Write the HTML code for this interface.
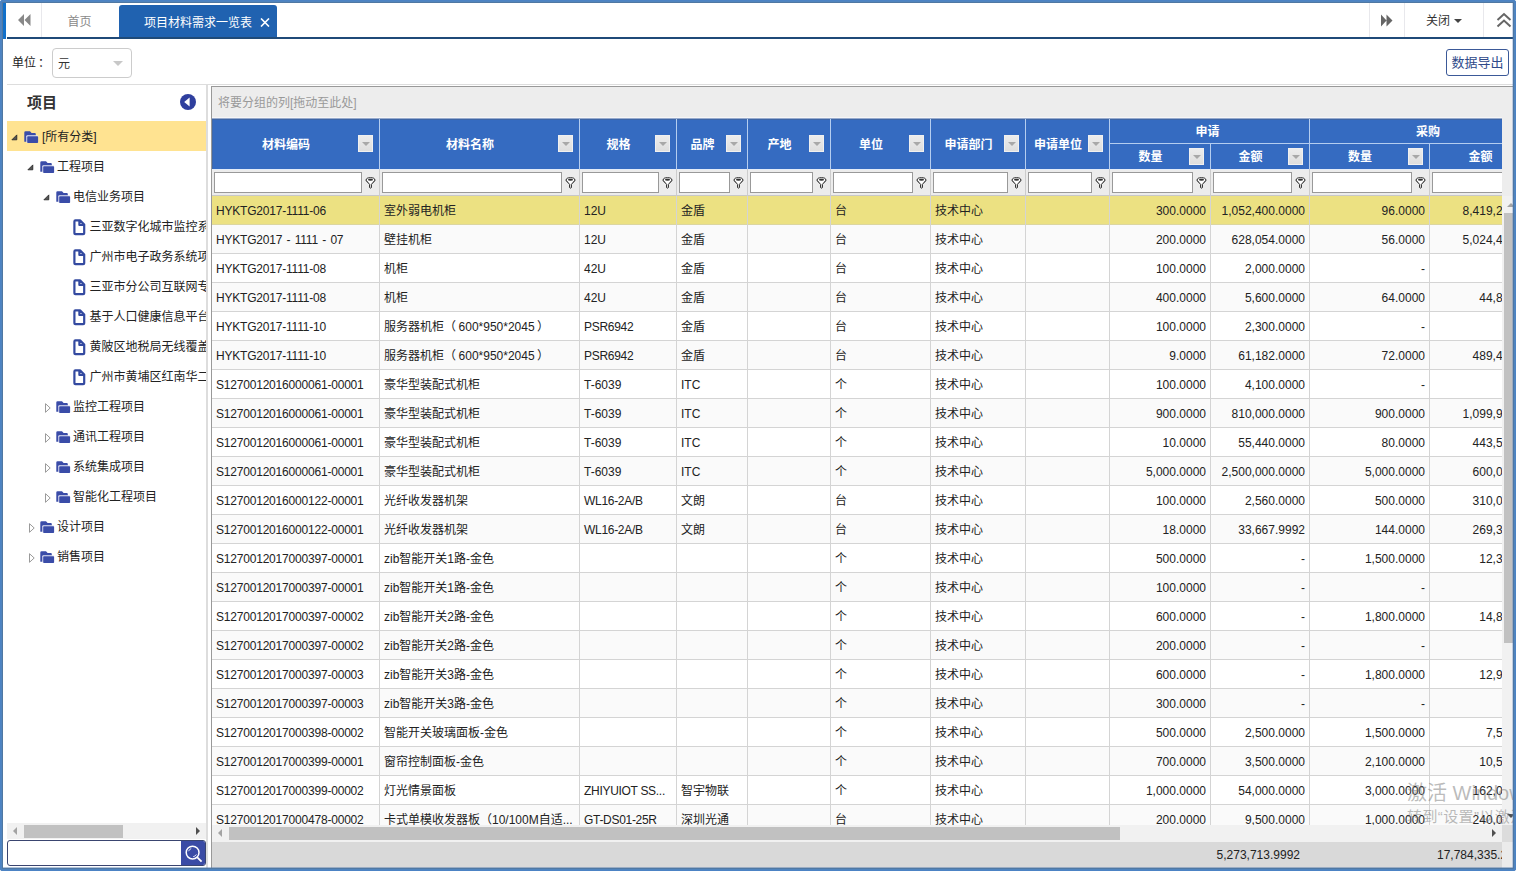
<!DOCTYPE html>
<html lang="zh-CN"><head><meta charset="utf-8"><title>项目材料需求一览表</title>
<style>
html,body{margin:0;padding:0;background:#fff;}
body{width:1518px;height:872px;position:relative;overflow:hidden;font-family:"Liberation Sans","Noto Sans CJK SC",sans-serif;font-size:12px;color:#222;}
div,span,b,i{box-sizing:border-box;}
b,i{font-weight:normal;font-style:normal;}
.abs{position:absolute;}
#frame{position:absolute;left:0;top:0;width:1516px;height:871px;border-radius:3px;z-index:50;pointer-events:none;box-shadow:inset 0 0 0 1px #4c83c4,inset 0 0 0 2px #5084be,inset 0 0 0 3px #4f78a3;}
#frame:before{content:"";position:absolute;left:3px;top:867px;width:1510px;height:1px;background:rgba(80,120,170,.45);}
#frame:after{content:"";position:absolute;left:1512px;top:3px;width:1px;height:865px;background:rgba(80,120,190,.3);}
#strip{position:absolute;left:3px;top:3px;width:3px;height:36px;background:#1170ca;}
#tabline{position:absolute;left:7px;top:37px;width:1506px;height:2px;background:#1f4a78;}
.vsep{position:absolute;top:3px;width:1px;height:34px;background:#e8e8ec;}
#home{position:absolute;left:41px;top:3px;width:77px;height:34px;line-height:39px;text-align:center;color:#8a8a8a;}
#tab{position:absolute;left:119px;top:5px;width:158px;height:32px;background:#2062b0;border-radius:3px 3px 0 0;color:#fff;line-height:36px;}
#tab span{position:absolute;left:25px;top:0;white-space:nowrap;}
#close{position:absolute;left:1426px;top:3px;height:34px;line-height:36px;color:#333;white-space:nowrap;}
#unitlbl{position:absolute;left:12px;top:51px;height:24px;line-height:24px;white-space:nowrap;color:#222;}
#unitsel{position:absolute;left:52px;top:48px;width:80px;height:30px;border:1px solid #ccc;border-radius:4px;background:#fff;line-height:30px;padding-left:5px;color:#333;}
#unitsel:after{content:"";position:absolute;left:59.5px;top:12px;border:5px solid transparent;border-top:5px solid #c8c8c8;border-bottom:0;}
#export{position:absolute;left:1446px;top:49px;width:63px;height:27px;border:1px solid #3b5998;border-radius:3px;background:#fff;color:#2f4a8a;font-size:13px;line-height:26px;text-align:center;white-space:nowrap;}
#hline{position:absolute;left:7px;top:84px;width:1506px;height:1px;background:#ddd;}
/* left panel */
#left{position:absolute;left:7px;top:85px;width:199px;height:783px;background:#fff;overflow:hidden;}
#ltitle{position:absolute;left:20px;top:7px;font-size:15px;font-weight:bold;color:#333;line-height:22px;}
#lcol{position:absolute;left:173px;top:9px;width:16px;height:16px;}
.tn{position:absolute;left:0;width:199px;height:30px;line-height:32px;white-space:nowrap;overflow:hidden;color:#222;}
.tn.sel{background:#ffe391;}
.tn svg{position:absolute;}
.tn span{position:absolute;top:0;}
#lscroll{position:absolute;left:0;top:738px;width:199px;height:16px;background:#f1f1f1;}
#lthumb{position:absolute;left:17px;top:2px;width:99px;height:13px;background:#c1c1c1;}
#search{position:absolute;left:0;top:755px;width:199px;height:26px;border:1px solid #3a4570;border-radius:3px;background:#fff;overflow:hidden;}
#sbtn{position:absolute;left:173px;top:-1px;width:26px;height:27px;background:#3a4ba5;}
#split{position:absolute;left:206px;top:85px;width:2px;height:783px;background:#ddd;}
/* grid */
#gborder{position:absolute;left:211px;top:86px;width:1302px;height:782px;border-left:1px solid #999;border-top:1px solid #999;}
#grid{position:absolute;left:212px;top:87px;width:1301px;height:781px;overflow:hidden;background:#ededed;}
#grouppanel{position:absolute;left:0;top:0;width:1301px;height:32px;line-height:33px;padding-left:6px;color:#999;background:#ededed;}
#gpl{position:absolute;left:0;top:30px;width:1290px;height:2px;background:linear-gradient(#f6f6f6 50%,#98abcd 50%);}
#ghead{position:absolute;left:0;top:32px;width:1290px;height:50px;background:#356bc1;box-shadow:inset 0 1px 0 #3f66a6,inset 1px 0 0 #4068a8;overflow:hidden;color:#fff;font-weight:bold;}
.hc{position:absolute;text-align:center;white-space:nowrap;overflow:hidden;}
.hc .ht{display:inline-block;margin-right:19px;}
.fb{position:absolute;right:6px;top:16px;width:15px;height:17px;border:1px solid #f0f0f0;background:linear-gradient(#ececec,#dedede);}
.fb:after{content:"";position:absolute;left:3px;top:6px;border:4px solid transparent;border-top:4px solid #a8a8a8;border-bottom:0;}
.hc.sub .fb{top:4px;}
.hb{position:absolute;top:0;height:25px;line-height:27px;text-align:center;padding-right:4px;border-bottom:1px solid #b4cdf0;}
.hs{position:absolute;top:0;width:1px;height:50px;background:#b4cdf0;}
#gfilter{position:absolute;left:0;top:82px;width:1290px;height:27px;background:#ececec;overflow:hidden;box-shadow:inset 0 1px 0 #e4ecf8,inset 0 -1px 0 #c8c8c8;}
.fc{position:absolute;top:0;height:27px;}
.fi{position:absolute;left:2px;right:17px;top:3px;height:21px;background:#fff;border:1px solid #999;}
.fun{position:absolute;right:3px;top:8px;}
.fs{position:absolute;top:0;width:1px;height:27px;background:#ccc;}
#gdata{position:absolute;left:0;top:109px;width:1290px;height:629px;background:#fff;overflow:hidden;}
.gr{position:absolute;left:0;width:1400px;height:29px;border-bottom:1px solid #d4d4d4;line-height:30px;}
.gr.alt{background:#fafafa;}
.gr.sel{background:#ece182;border-bottom-color:#dcd6a0;}
.c{position:absolute;top:0;height:28px;padding:0 4px;white-space:nowrap;overflow:hidden;}
.c.n{text-align:right;}
.ds{position:absolute;top:0;width:1px;height:700px;background:#d4d4d4;}
#hscroll{position:absolute;left:0;top:738px;width:1290px;height:17px;background:#f1f1f1;}
#hthumb{position:absolute;left:17px;top:2px;width:891px;height:13px;background:#c1c1c1;}
#corner{position:absolute;left:1290px;top:738px;width:11px;height:17px;background:#dcdcdc;}
#vscroll{position:absolute;left:1290px;top:109px;width:17px;height:629px;background:#f1f1f1;}
#vthumb{position:absolute;left:2px;top:17px;width:13px;height:430px;background:#c1c1c1;}
#gfoot{position:absolute;left:0;top:755px;width:1290px;height:26px;background:#d9d9d9;line-height:27px;overflow:hidden;}
#gfoot2{position:absolute;left:1290px;top:755px;width:11px;height:26px;background:#ebebeb;}
.ft{position:absolute;top:0;text-align:right;white-space:nowrap;}
.tri{position:absolute;width:0;height:0;border:4px solid transparent;}
#wm{position:absolute;left:1407px;top:779px;color:rgba(120,120,120,.5);white-space:nowrap;z-index:40;width:106px;overflow:hidden;pointer-events:none;}
#wm div{white-space:nowrap;}

.c.k{letter-spacing:-0.2px;}
.c.k3{letter-spacing:-0.3px;}

</style></head><body>
<div id="strip"></div>
<div id="tabline"></div>
<svg class="abs" style="left:18px;top:14px" width="13" height="13" viewBox="0 0 13 13"><path d="M0 6 L6 0 V12 Z M6.5 6 L12.5 0 V12 Z" fill="#888"/></svg>
<div class="vsep" style="left:41px"></div>
<div id="home">首页</div>
<div id="tab"><span>项目材料需求一览表</span>
<svg class="abs" style="left:141px;top:13px" width="10" height="9" viewBox="0 0 10 9"><path d="M1 0.5 L9 8.5 M9 0.5 L1 8.5" stroke="#fff" stroke-width="1.6" fill="none"/></svg></div>
<div class="vsep" style="left:1369px"></div>
<svg class="abs" style="left:1381px;top:14px" width="12" height="13" viewBox="0 0 12 13"><path d="M0 0.5 L5.5 6.5 L0 12.5 Z M5.5 0.5 L11.5 6.5 L5.5 12.5 Z" fill="#666"/></svg>
<div class="vsep" style="left:1404px"></div>
<div id="close">关闭</div>
<div class="tri" style="left:1454px;top:19px;border-top:4px solid #444;border-bottom:0"></div>
<div class="vsep" style="left:1483px"></div>
<svg class="abs" style="left:1496px;top:12px" width="16" height="16" viewBox="0 0 16 16"><path d="M1.5 8 L8 2 L14.5 8 M1.5 14.5 L8 8.5 L14.5 14.5" stroke="#666" stroke-width="2" fill="none"/></svg>
<div id="unitlbl">单位<span style="margin-left:2px">：</span></div>
<div id="unitsel">元</div>
<div id="export">数据导出</div>
<div id="hline"></div>

<div id="left">
<div id="ltitle">项目</div>
<svg id="lcol" viewBox="0 0 16 16"><circle cx="8" cy="8" r="8" fill="#2f3f9e"/><path d="M4.2 8 L9.6 3.6 V12.4 Z" fill="#fff"/></svg>
<div class="tn sel" style="top:36px"><svg style="left:4px;top:13px" width="7" height="7" viewBox="0 0 7 7"><path d="M5.8 0.9 V5.8 H0.9 Z" fill="#555" stroke="#222" stroke-width="0.8"/></svg><svg style="left:17px;top:10px" width="15" height="13" viewBox="0 0 15 13"><path d="M0.3 1.4 Q0.3 0.2 1.5 0.2 H6 L7.6 2 H10.8 Q11.8 2 11.8 3 V10.8 H0.3 Z" fill="#3a4ca8"/><rect x="2.3" y="4.3" width="11.8" height="7.7" rx="1" fill="#e4e6f4"/><rect x="3.2" y="5.2" width="10.9" height="6.8" rx="0.8" fill="#3a4ca8"/></svg><span style="left:35px">[所有分类]</span></div>
<div class="tn" style="top:66px"><svg style="left:20px;top:13px" width="7" height="7" viewBox="0 0 7 7"><path d="M5.8 0.9 V5.8 H0.9 Z" fill="#555" stroke="#222" stroke-width="0.8"/></svg><svg style="left:33px;top:10px" width="15" height="13" viewBox="0 0 15 13"><path d="M0.3 1.4 Q0.3 0.2 1.5 0.2 H6 L7.6 2 H10.8 Q11.8 2 11.8 3 V10.8 H0.3 Z" fill="#3a4ca8"/><rect x="2.3" y="4.3" width="11.8" height="7.7" rx="1" fill="#e4e6f4"/><rect x="3.2" y="5.2" width="10.9" height="6.8" rx="0.8" fill="#3a4ca8"/></svg><span style="left:50px">工程项目</span></div>
<div class="tn" style="top:96px"><svg style="left:36px;top:13px" width="7" height="7" viewBox="0 0 7 7"><path d="M5.8 0.9 V5.8 H0.9 Z" fill="#555" stroke="#222" stroke-width="0.8"/></svg><svg style="left:49px;top:10px" width="15" height="13" viewBox="0 0 15 13"><path d="M0.3 1.4 Q0.3 0.2 1.5 0.2 H6 L7.6 2 H10.8 Q11.8 2 11.8 3 V10.8 H0.3 Z" fill="#3a4ca8"/><rect x="2.3" y="4.3" width="11.8" height="7.7" rx="1" fill="#e4e6f4"/><rect x="3.2" y="5.2" width="10.9" height="6.8" rx="0.8" fill="#3a4ca8"/></svg><span style="left:66px">电信业务项目</span></div>
<div class="tn" style="top:126px"><svg style="left:66px;top:8px" width="13" height="17" viewBox="0 0 13 17"><path d="M2.4 1.4 H7 L11.2 5.6 V14.2 Q11.2 15.2 10.2 15.2 H2.4 Q1.4 15.2 1.4 14.2 V2.4 Q1.4 1.4 2.4 1.4 Z M6.4 1.6 V6 H11" fill="none" stroke="#3349a0" stroke-width="2.2" stroke-linejoin="round"/></svg><span style="left:82.5px">三亚数字化城市监控系统项目</span></div>
<div class="tn" style="top:156px"><svg style="left:66px;top:8px" width="13" height="17" viewBox="0 0 13 17"><path d="M2.4 1.4 H7 L11.2 5.6 V14.2 Q11.2 15.2 10.2 15.2 H2.4 Q1.4 15.2 1.4 14.2 V2.4 Q1.4 1.4 2.4 1.4 Z M6.4 1.6 V6 H11" fill="none" stroke="#3349a0" stroke-width="2.2" stroke-linejoin="round"/></svg><span style="left:82.5px">广州市电子政务系统项目</span></div>
<div class="tn" style="top:186px"><svg style="left:66px;top:8px" width="13" height="17" viewBox="0 0 13 17"><path d="M2.4 1.4 H7 L11.2 5.6 V14.2 Q11.2 15.2 10.2 15.2 H2.4 Q1.4 15.2 1.4 14.2 V2.4 Q1.4 1.4 2.4 1.4 Z M6.4 1.6 V6 H11" fill="none" stroke="#3349a0" stroke-width="2.2" stroke-linejoin="round"/></svg><span style="left:82.5px">三亚市分公司互联网专线项目</span></div>
<div class="tn" style="top:216px"><svg style="left:66px;top:8px" width="13" height="17" viewBox="0 0 13 17"><path d="M2.4 1.4 H7 L11.2 5.6 V14.2 Q11.2 15.2 10.2 15.2 H2.4 Q1.4 15.2 1.4 14.2 V2.4 Q1.4 1.4 2.4 1.4 Z M6.4 1.6 V6 H11" fill="none" stroke="#3349a0" stroke-width="2.2" stroke-linejoin="round"/></svg><span style="left:82.5px">基于人口健康信息平台项目</span></div>
<div class="tn" style="top:246px"><svg style="left:66px;top:8px" width="13" height="17" viewBox="0 0 13 17"><path d="M2.4 1.4 H7 L11.2 5.6 V14.2 Q11.2 15.2 10.2 15.2 H2.4 Q1.4 15.2 1.4 14.2 V2.4 Q1.4 1.4 2.4 1.4 Z M6.4 1.6 V6 H11" fill="none" stroke="#3349a0" stroke-width="2.2" stroke-linejoin="round"/></svg><span style="left:82.5px">黄陂区地税局无线覆盖项目</span></div>
<div class="tn" style="top:276px"><svg style="left:66px;top:8px" width="13" height="17" viewBox="0 0 13 17"><path d="M2.4 1.4 H7 L11.2 5.6 V14.2 Q11.2 15.2 10.2 15.2 H2.4 Q1.4 15.2 1.4 14.2 V2.4 Q1.4 1.4 2.4 1.4 Z M6.4 1.6 V6 H11" fill="none" stroke="#3349a0" stroke-width="2.2" stroke-linejoin="round"/></svg><span style="left:82.5px">广州市黄埔区红南华二期项目</span></div>
<div class="tn" style="top:306px"><svg style="left:38px;top:12px" width="6" height="10" viewBox="0 0 6 10"><path d="M0.5 0.7 L5.2 5 L0.5 9.3 Z" fill="#fff" stroke="#9a9a9a" stroke-width="1"/></svg><svg style="left:49px;top:10px" width="15" height="13" viewBox="0 0 15 13"><path d="M0.3 1.4 Q0.3 0.2 1.5 0.2 H6 L7.6 2 H10.8 Q11.8 2 11.8 3 V10.8 H0.3 Z" fill="#3a4ca8"/><rect x="2.3" y="4.3" width="11.8" height="7.7" rx="1" fill="#e4e6f4"/><rect x="3.2" y="5.2" width="10.9" height="6.8" rx="0.8" fill="#3a4ca8"/></svg><span style="left:66px">监控工程项目</span></div>
<div class="tn" style="top:336px"><svg style="left:38px;top:12px" width="6" height="10" viewBox="0 0 6 10"><path d="M0.5 0.7 L5.2 5 L0.5 9.3 Z" fill="#fff" stroke="#9a9a9a" stroke-width="1"/></svg><svg style="left:49px;top:10px" width="15" height="13" viewBox="0 0 15 13"><path d="M0.3 1.4 Q0.3 0.2 1.5 0.2 H6 L7.6 2 H10.8 Q11.8 2 11.8 3 V10.8 H0.3 Z" fill="#3a4ca8"/><rect x="2.3" y="4.3" width="11.8" height="7.7" rx="1" fill="#e4e6f4"/><rect x="3.2" y="5.2" width="10.9" height="6.8" rx="0.8" fill="#3a4ca8"/></svg><span style="left:66px">通讯工程项目</span></div>
<div class="tn" style="top:366px"><svg style="left:38px;top:12px" width="6" height="10" viewBox="0 0 6 10"><path d="M0.5 0.7 L5.2 5 L0.5 9.3 Z" fill="#fff" stroke="#9a9a9a" stroke-width="1"/></svg><svg style="left:49px;top:10px" width="15" height="13" viewBox="0 0 15 13"><path d="M0.3 1.4 Q0.3 0.2 1.5 0.2 H6 L7.6 2 H10.8 Q11.8 2 11.8 3 V10.8 H0.3 Z" fill="#3a4ca8"/><rect x="2.3" y="4.3" width="11.8" height="7.7" rx="1" fill="#e4e6f4"/><rect x="3.2" y="5.2" width="10.9" height="6.8" rx="0.8" fill="#3a4ca8"/></svg><span style="left:66px">系统集成项目</span></div>
<div class="tn" style="top:396px"><svg style="left:38px;top:12px" width="6" height="10" viewBox="0 0 6 10"><path d="M0.5 0.7 L5.2 5 L0.5 9.3 Z" fill="#fff" stroke="#9a9a9a" stroke-width="1"/></svg><svg style="left:49px;top:10px" width="15" height="13" viewBox="0 0 15 13"><path d="M0.3 1.4 Q0.3 0.2 1.5 0.2 H6 L7.6 2 H10.8 Q11.8 2 11.8 3 V10.8 H0.3 Z" fill="#3a4ca8"/><rect x="2.3" y="4.3" width="11.8" height="7.7" rx="1" fill="#e4e6f4"/><rect x="3.2" y="5.2" width="10.9" height="6.8" rx="0.8" fill="#3a4ca8"/></svg><span style="left:66px">智能化工程项目</span></div>
<div class="tn" style="top:426px"><svg style="left:22px;top:12px" width="6" height="10" viewBox="0 0 6 10"><path d="M0.5 0.7 L5.2 5 L0.5 9.3 Z" fill="#fff" stroke="#9a9a9a" stroke-width="1"/></svg><svg style="left:33px;top:10px" width="15" height="13" viewBox="0 0 15 13"><path d="M0.3 1.4 Q0.3 0.2 1.5 0.2 H6 L7.6 2 H10.8 Q11.8 2 11.8 3 V10.8 H0.3 Z" fill="#3a4ca8"/><rect x="2.3" y="4.3" width="11.8" height="7.7" rx="1" fill="#e4e6f4"/><rect x="3.2" y="5.2" width="10.9" height="6.8" rx="0.8" fill="#3a4ca8"/></svg><span style="left:50px">设计项目</span></div>
<div class="tn" style="top:456px"><svg style="left:22px;top:12px" width="6" height="10" viewBox="0 0 6 10"><path d="M0.5 0.7 L5.2 5 L0.5 9.3 Z" fill="#fff" stroke="#9a9a9a" stroke-width="1"/></svg><svg style="left:33px;top:10px" width="15" height="13" viewBox="0 0 15 13"><path d="M0.3 1.4 Q0.3 0.2 1.5 0.2 H6 L7.6 2 H10.8 Q11.8 2 11.8 3 V10.8 H0.3 Z" fill="#3a4ca8"/><rect x="2.3" y="4.3" width="11.8" height="7.7" rx="1" fill="#e4e6f4"/><rect x="3.2" y="5.2" width="10.9" height="6.8" rx="0.8" fill="#3a4ca8"/></svg><span style="left:50px">销售项目</span></div>
<div id="lscroll"><div class="tri" style="left:6px;top:4px;border-right:4px solid #a3a3a3;border-left:0"></div><div id="lthumb"></div><div class="tri" style="left:189px;top:4px;border-left:4px solid #505050;border-right:0"></div></div>
<div id="search"><div id="sbtn"><svg class="abs" style="left:3.5px;top:4.5px" width="18" height="18" viewBox="0 0 18 18"><circle cx="7.6" cy="7.6" r="6.4" fill="none" stroke="#fff" stroke-width="1.5"/><path d="M12.3 12.3 L16.6 16.6" stroke="#fff" stroke-width="1.8"/><path d="M3.6 6.2 A4.2 4.2 0 0 1 6.2 3.6 M11.4 9.4 A4.2 4.2 0 0 1 8.2 11.7" fill="none" stroke="#dfe3f6" stroke-width="1"/></svg></div></div>
</div>
<div id="split"></div>
<div id="gborder"></div>
<div id="grid">
<div id="grouppanel">将要分组的列[拖动至此处]</div><div id="gpl"></div>
<div id="ghead">
<div class="hc" style="left:0px;width:167px;top:0;height:50px;line-height:52px"><span class="ht" >材料编码</span><i class="fb"></i></div>
<div class="hc" style="left:168px;width:199px;top:0;height:50px;line-height:52px"><span class="ht" >材料名称</span><i class="fb"></i></div>
<div class="hc" style="left:368px;width:96px;top:0;height:50px;line-height:52px"><span class="ht" >规格</span><i class="fb"></i></div>
<div class="hc" style="left:465px;width:70px;top:0;height:50px;line-height:52px"><span class="ht" >品牌</span><i class="fb"></i></div>
<div class="hc" style="left:536px;width:82px;top:0;height:50px;line-height:52px"><span class="ht" >产地</span><i class="fb"></i></div>
<div class="hc" style="left:619px;width:99px;top:0;height:50px;line-height:52px"><span class="ht" >单位</span><i class="fb"></i></div>
<div class="hc" style="left:719px;width:94px;top:0;height:50px;line-height:52px"><span class="ht" >申请部门</span><i class="fb"></i></div>
<div class="hc" style="left:814px;width:83px;top:0;height:50px;line-height:52px"><span class="ht" >申请单位</span><i class="fb"></i></div>
<div class="hb" style="left:898px;width:199px">申请</div>
<div class="hb" style="left:1098px;width:240px">采购</div>
<div class="hc sub" style="left:898px;width:100px;top:25px;height:25px;line-height:26px"><span class="ht">数量</span><i class="fb"></i></div>
<div class="hc sub" style="left:999px;width:98px;top:25px;height:25px;line-height:26px"><span class="ht">金额</span><i class="fb"></i></div>
<div class="hc sub" style="left:1098px;width:119px;top:25px;height:25px;line-height:26px"><span class="ht">数量</span><i class="fb"></i></div>
<div class="hc sub" style="left:1218px;width:120px;top:25px;height:25px;line-height:26px"><span class="ht">金额</span><i class="fb"></i></div>
<b class="hs" style="left:167px"></b>
<b class="hs" style="left:367px"></b>
<b class="hs" style="left:464px"></b>
<b class="hs" style="left:535px"></b>
<b class="hs" style="left:618px"></b>
<b class="hs" style="left:718px"></b>
<b class="hs" style="left:813px"></b>
<b class="hs" style="left:897px"></b>
<b class="hs" style="left:998px;top:25px;height:25px"></b>
<b class="hs" style="left:1097px"></b>
<b class="hs" style="left:1217px;top:25px;height:25px"></b>
<b class="hs" style="left:1338px"></b>
</div>
<div id="gfilter">
<div class="fc" style="left:0px;width:167px"><span class="fi"></span><svg class="fun" width="11" height="12" viewBox="0 0 11 12"><ellipse cx="5.5" cy="3" rx="4.4" ry="2.3" fill="#fff" stroke="#222" stroke-width="1"/><path d="M1.3 3.6 L4.6 7.4 V10.6 Q5.5 11.6 6.4 10.6 V7.4 L9.7 3.6" fill="#fff" stroke="#222" stroke-width="1"/><ellipse cx="5.5" cy="2.7" rx="2.6" ry="1" fill="#333"/></svg></div>
<b class="fs" style="left:167px"></b>
<div class="fc" style="left:168px;width:199px"><span class="fi"></span><svg class="fun" width="11" height="12" viewBox="0 0 11 12"><ellipse cx="5.5" cy="3" rx="4.4" ry="2.3" fill="#fff" stroke="#222" stroke-width="1"/><path d="M1.3 3.6 L4.6 7.4 V10.6 Q5.5 11.6 6.4 10.6 V7.4 L9.7 3.6" fill="#fff" stroke="#222" stroke-width="1"/><ellipse cx="5.5" cy="2.7" rx="2.6" ry="1" fill="#333"/></svg></div>
<b class="fs" style="left:367px"></b>
<div class="fc" style="left:368px;width:96px"><span class="fi"></span><svg class="fun" width="11" height="12" viewBox="0 0 11 12"><ellipse cx="5.5" cy="3" rx="4.4" ry="2.3" fill="#fff" stroke="#222" stroke-width="1"/><path d="M1.3 3.6 L4.6 7.4 V10.6 Q5.5 11.6 6.4 10.6 V7.4 L9.7 3.6" fill="#fff" stroke="#222" stroke-width="1"/><ellipse cx="5.5" cy="2.7" rx="2.6" ry="1" fill="#333"/></svg></div>
<b class="fs" style="left:464px"></b>
<div class="fc" style="left:465px;width:70px"><span class="fi"></span><svg class="fun" width="11" height="12" viewBox="0 0 11 12"><ellipse cx="5.5" cy="3" rx="4.4" ry="2.3" fill="#fff" stroke="#222" stroke-width="1"/><path d="M1.3 3.6 L4.6 7.4 V10.6 Q5.5 11.6 6.4 10.6 V7.4 L9.7 3.6" fill="#fff" stroke="#222" stroke-width="1"/><ellipse cx="5.5" cy="2.7" rx="2.6" ry="1" fill="#333"/></svg></div>
<b class="fs" style="left:535px"></b>
<div class="fc" style="left:536px;width:82px"><span class="fi"></span><svg class="fun" width="11" height="12" viewBox="0 0 11 12"><ellipse cx="5.5" cy="3" rx="4.4" ry="2.3" fill="#fff" stroke="#222" stroke-width="1"/><path d="M1.3 3.6 L4.6 7.4 V10.6 Q5.5 11.6 6.4 10.6 V7.4 L9.7 3.6" fill="#fff" stroke="#222" stroke-width="1"/><ellipse cx="5.5" cy="2.7" rx="2.6" ry="1" fill="#333"/></svg></div>
<b class="fs" style="left:618px"></b>
<div class="fc" style="left:619px;width:99px"><span class="fi"></span><svg class="fun" width="11" height="12" viewBox="0 0 11 12"><ellipse cx="5.5" cy="3" rx="4.4" ry="2.3" fill="#fff" stroke="#222" stroke-width="1"/><path d="M1.3 3.6 L4.6 7.4 V10.6 Q5.5 11.6 6.4 10.6 V7.4 L9.7 3.6" fill="#fff" stroke="#222" stroke-width="1"/><ellipse cx="5.5" cy="2.7" rx="2.6" ry="1" fill="#333"/></svg></div>
<b class="fs" style="left:718px"></b>
<div class="fc" style="left:719px;width:94px"><span class="fi"></span><svg class="fun" width="11" height="12" viewBox="0 0 11 12"><ellipse cx="5.5" cy="3" rx="4.4" ry="2.3" fill="#fff" stroke="#222" stroke-width="1"/><path d="M1.3 3.6 L4.6 7.4 V10.6 Q5.5 11.6 6.4 10.6 V7.4 L9.7 3.6" fill="#fff" stroke="#222" stroke-width="1"/><ellipse cx="5.5" cy="2.7" rx="2.6" ry="1" fill="#333"/></svg></div>
<b class="fs" style="left:813px"></b>
<div class="fc" style="left:814px;width:83px"><span class="fi"></span><svg class="fun" width="11" height="12" viewBox="0 0 11 12"><ellipse cx="5.5" cy="3" rx="4.4" ry="2.3" fill="#fff" stroke="#222" stroke-width="1"/><path d="M1.3 3.6 L4.6 7.4 V10.6 Q5.5 11.6 6.4 10.6 V7.4 L9.7 3.6" fill="#fff" stroke="#222" stroke-width="1"/><ellipse cx="5.5" cy="2.7" rx="2.6" ry="1" fill="#333"/></svg></div>
<b class="fs" style="left:897px"></b>
<div class="fc" style="left:898px;width:100px"><span class="fi"></span><svg class="fun" width="11" height="12" viewBox="0 0 11 12"><ellipse cx="5.5" cy="3" rx="4.4" ry="2.3" fill="#fff" stroke="#222" stroke-width="1"/><path d="M1.3 3.6 L4.6 7.4 V10.6 Q5.5 11.6 6.4 10.6 V7.4 L9.7 3.6" fill="#fff" stroke="#222" stroke-width="1"/><ellipse cx="5.5" cy="2.7" rx="2.6" ry="1" fill="#333"/></svg></div>
<b class="fs" style="left:998px"></b>
<div class="fc" style="left:999px;width:98px"><span class="fi"></span><svg class="fun" width="11" height="12" viewBox="0 0 11 12"><ellipse cx="5.5" cy="3" rx="4.4" ry="2.3" fill="#fff" stroke="#222" stroke-width="1"/><path d="M1.3 3.6 L4.6 7.4 V10.6 Q5.5 11.6 6.4 10.6 V7.4 L9.7 3.6" fill="#fff" stroke="#222" stroke-width="1"/><ellipse cx="5.5" cy="2.7" rx="2.6" ry="1" fill="#333"/></svg></div>
<b class="fs" style="left:1097px"></b>
<div class="fc" style="left:1098px;width:119px"><span class="fi"></span><svg class="fun" width="11" height="12" viewBox="0 0 11 12"><ellipse cx="5.5" cy="3" rx="4.4" ry="2.3" fill="#fff" stroke="#222" stroke-width="1"/><path d="M1.3 3.6 L4.6 7.4 V10.6 Q5.5 11.6 6.4 10.6 V7.4 L9.7 3.6" fill="#fff" stroke="#222" stroke-width="1"/><ellipse cx="5.5" cy="2.7" rx="2.6" ry="1" fill="#333"/></svg></div>
<b class="fs" style="left:1217px"></b>
<div class="fc" style="left:1218px;width:120px"><span class="fi"></span><svg class="fun" width="11" height="12" viewBox="0 0 11 12"><ellipse cx="5.5" cy="3" rx="4.4" ry="2.3" fill="#fff" stroke="#222" stroke-width="1"/><path d="M1.3 3.6 L4.6 7.4 V10.6 Q5.5 11.6 6.4 10.6 V7.4 L9.7 3.6" fill="#fff" stroke="#222" stroke-width="1"/><ellipse cx="5.5" cy="2.7" rx="2.6" ry="1" fill="#333"/></svg></div>
<b class="fs" style="left:1338px"></b>
</div>
<div id="gdata">
<div class="gr sel" style="top:0px">
<span class="c k" style="left:0px;width:167px">HYKTG2017-1111-06</span>
<span class="c" style="left:168px;width:199px">室外弱电机柜</span>
<span class="c" style="left:368px;width:96px">12U</span>
<span class="c" style="left:465px;width:70px">金盾</span>
<span class="c" style="left:536px;width:82px"></span>
<span class="c" style="left:619px;width:99px">台</span>
<span class="c" style="left:719px;width:94px">技术中心</span>
<span class="c" style="left:814px;width:83px"></span>
<span class="c n" style="left:898px;width:100px">300.0000</span>
<span class="c n" style="left:999px;width:98px">1,052,400.0000</span>
<span class="c n" style="left:1098px;width:119px">96.0000</span>
<span class="c n" style="left:1218px;width:120px">8,419,200.0000</span>
</div>
<div class="gr alt" style="top:29px">
<span class="c k" style="left:0px;width:167px;word-spacing:1.2px">HYKTG2017 - 1111 - 07</span>
<span class="c" style="left:168px;width:199px">壁挂机柜</span>
<span class="c" style="left:368px;width:96px">12U</span>
<span class="c" style="left:465px;width:70px">金盾</span>
<span class="c" style="left:536px;width:82px"></span>
<span class="c" style="left:619px;width:99px">台</span>
<span class="c" style="left:719px;width:94px">技术中心</span>
<span class="c" style="left:814px;width:83px"></span>
<span class="c n" style="left:898px;width:100px">200.0000</span>
<span class="c n" style="left:999px;width:98px">628,054.0000</span>
<span class="c n" style="left:1098px;width:119px">56.0000</span>
<span class="c n" style="left:1218px;width:120px">5,024,432.0000</span>
</div>
<div class="gr" style="top:58px">
<span class="c k" style="left:0px;width:167px">HYKTG2017-1111-08</span>
<span class="c" style="left:168px;width:199px">机柜</span>
<span class="c" style="left:368px;width:96px">42U</span>
<span class="c" style="left:465px;width:70px">金盾</span>
<span class="c" style="left:536px;width:82px"></span>
<span class="c" style="left:619px;width:99px">台</span>
<span class="c" style="left:719px;width:94px">技术中心</span>
<span class="c" style="left:814px;width:83px"></span>
<span class="c n" style="left:898px;width:100px">100.0000</span>
<span class="c n" style="left:999px;width:98px">2,000.0000</span>
<span class="c n" style="left:1098px;width:119px">-</span>
<span class="c n" style="left:1218px;width:120px"></span>
</div>
<div class="gr alt" style="top:87px">
<span class="c k" style="left:0px;width:167px">HYKTG2017-1111-08</span>
<span class="c" style="left:168px;width:199px">机柜</span>
<span class="c" style="left:368px;width:96px">42U</span>
<span class="c" style="left:465px;width:70px">金盾</span>
<span class="c" style="left:536px;width:82px"></span>
<span class="c" style="left:619px;width:99px">台</span>
<span class="c" style="left:719px;width:94px">技术中心</span>
<span class="c" style="left:814px;width:83px"></span>
<span class="c n" style="left:898px;width:100px">400.0000</span>
<span class="c n" style="left:999px;width:98px">5,600.0000</span>
<span class="c n" style="left:1098px;width:119px">64.0000</span>
<span class="c n" style="left:1218px;width:120px">44,800.0000</span>
</div>
<div class="gr" style="top:116px">
<span class="c k" style="left:0px;width:167px">HYKTG2017-1111-10</span>
<span class="c" style="left:168px;width:199px">服务器机柜<span style="letter-spacing:2.5px">（</span>600*950*2045<span style="margin-left:2.5px">）</span></span>
<span class="c k3" style="left:368px;width:96px">PSR6942</span>
<span class="c" style="left:465px;width:70px">金盾</span>
<span class="c" style="left:536px;width:82px"></span>
<span class="c" style="left:619px;width:99px">台</span>
<span class="c" style="left:719px;width:94px">技术中心</span>
<span class="c" style="left:814px;width:83px"></span>
<span class="c n" style="left:898px;width:100px">100.0000</span>
<span class="c n" style="left:999px;width:98px">2,300.0000</span>
<span class="c n" style="left:1098px;width:119px">-</span>
<span class="c n" style="left:1218px;width:120px"></span>
</div>
<div class="gr alt" style="top:145px">
<span class="c k" style="left:0px;width:167px">HYKTG2017-1111-10</span>
<span class="c" style="left:168px;width:199px">服务器机柜<span style="letter-spacing:2.5px">（</span>600*950*2045<span style="margin-left:2.5px">）</span></span>
<span class="c k3" style="left:368px;width:96px">PSR6942</span>
<span class="c" style="left:465px;width:70px">金盾</span>
<span class="c" style="left:536px;width:82px"></span>
<span class="c" style="left:619px;width:99px">台</span>
<span class="c" style="left:719px;width:94px">技术中心</span>
<span class="c" style="left:814px;width:83px"></span>
<span class="c n" style="left:898px;width:100px">9.0000</span>
<span class="c n" style="left:999px;width:98px">61,182.0000</span>
<span class="c n" style="left:1098px;width:119px">72.0000</span>
<span class="c n" style="left:1218px;width:120px">489,456.0000</span>
</div>
<div class="gr" style="top:174px">
<span class="c k" style="left:0px;width:167px">S1270012016000061-00001</span>
<span class="c" style="left:168px;width:199px">豪华型装配式机柜</span>
<span class="c" style="left:368px;width:96px">T-6039</span>
<span class="c" style="left:465px;width:70px">ITC</span>
<span class="c" style="left:536px;width:82px"></span>
<span class="c" style="left:619px;width:99px">个</span>
<span class="c" style="left:719px;width:94px">技术中心</span>
<span class="c" style="left:814px;width:83px"></span>
<span class="c n" style="left:898px;width:100px">100.0000</span>
<span class="c n" style="left:999px;width:98px">4,100.0000</span>
<span class="c n" style="left:1098px;width:119px">-</span>
<span class="c n" style="left:1218px;width:120px"></span>
</div>
<div class="gr alt" style="top:203px">
<span class="c k" style="left:0px;width:167px">S1270012016000061-00001</span>
<span class="c" style="left:168px;width:199px">豪华型装配式机柜</span>
<span class="c" style="left:368px;width:96px">T-6039</span>
<span class="c" style="left:465px;width:70px">ITC</span>
<span class="c" style="left:536px;width:82px"></span>
<span class="c" style="left:619px;width:99px">个</span>
<span class="c" style="left:719px;width:94px">技术中心</span>
<span class="c" style="left:814px;width:83px"></span>
<span class="c n" style="left:898px;width:100px">900.0000</span>
<span class="c n" style="left:999px;width:98px">810,000.0000</span>
<span class="c n" style="left:1098px;width:119px">900.0000</span>
<span class="c n" style="left:1218px;width:120px">1,099,980.0000</span>
</div>
<div class="gr" style="top:232px">
<span class="c k" style="left:0px;width:167px">S1270012016000061-00001</span>
<span class="c" style="left:168px;width:199px">豪华型装配式机柜</span>
<span class="c" style="left:368px;width:96px">T-6039</span>
<span class="c" style="left:465px;width:70px">ITC</span>
<span class="c" style="left:536px;width:82px"></span>
<span class="c" style="left:619px;width:99px">个</span>
<span class="c" style="left:719px;width:94px">技术中心</span>
<span class="c" style="left:814px;width:83px"></span>
<span class="c n" style="left:898px;width:100px">10.0000</span>
<span class="c n" style="left:999px;width:98px">55,440.0000</span>
<span class="c n" style="left:1098px;width:119px">80.0000</span>
<span class="c n" style="left:1218px;width:120px">443,520.0000</span>
</div>
<div class="gr alt" style="top:261px">
<span class="c k" style="left:0px;width:167px">S1270012016000061-00001</span>
<span class="c" style="left:168px;width:199px">豪华型装配式机柜</span>
<span class="c" style="left:368px;width:96px">T-6039</span>
<span class="c" style="left:465px;width:70px">ITC</span>
<span class="c" style="left:536px;width:82px"></span>
<span class="c" style="left:619px;width:99px">个</span>
<span class="c" style="left:719px;width:94px">技术中心</span>
<span class="c" style="left:814px;width:83px"></span>
<span class="c n" style="left:898px;width:100px">5,000.0000</span>
<span class="c n" style="left:999px;width:98px">2,500,000.0000</span>
<span class="c n" style="left:1098px;width:119px">5,000.0000</span>
<span class="c n" style="left:1218px;width:120px">600,000.0000</span>
</div>
<div class="gr" style="top:290px">
<span class="c k" style="left:0px;width:167px">S1270012016000122-00001</span>
<span class="c" style="left:168px;width:199px">光纤收发器机架</span>
<span class="c k3" style="left:368px;width:96px">WL16-2A/B</span>
<span class="c" style="left:465px;width:70px">文朗</span>
<span class="c" style="left:536px;width:82px"></span>
<span class="c" style="left:619px;width:99px">台</span>
<span class="c" style="left:719px;width:94px">技术中心</span>
<span class="c" style="left:814px;width:83px"></span>
<span class="c n" style="left:898px;width:100px">100.0000</span>
<span class="c n" style="left:999px;width:98px">2,560.0000</span>
<span class="c n" style="left:1098px;width:119px">500.0000</span>
<span class="c n" style="left:1218px;width:120px">310,000.0000</span>
</div>
<div class="gr alt" style="top:319px">
<span class="c k" style="left:0px;width:167px">S1270012016000122-00001</span>
<span class="c" style="left:168px;width:199px">光纤收发器机架</span>
<span class="c k3" style="left:368px;width:96px">WL16-2A/B</span>
<span class="c" style="left:465px;width:70px">文朗</span>
<span class="c" style="left:536px;width:82px"></span>
<span class="c" style="left:619px;width:99px">台</span>
<span class="c" style="left:719px;width:94px">技术中心</span>
<span class="c" style="left:814px;width:83px"></span>
<span class="c n" style="left:898px;width:100px">18.0000</span>
<span class="c n" style="left:999px;width:98px">33,667.9992</span>
<span class="c n" style="left:1098px;width:119px">144.0000</span>
<span class="c n" style="left:1218px;width:120px">269,343.9936</span>
</div>
<div class="gr" style="top:348px">
<span class="c k" style="left:0px;width:167px">S1270012017000397-00001</span>
<span class="c" style="left:168px;width:199px">zib智能开关1路-金色</span>
<span class="c" style="left:368px;width:96px"></span>
<span class="c" style="left:465px;width:70px"></span>
<span class="c" style="left:536px;width:82px"></span>
<span class="c" style="left:619px;width:99px">个</span>
<span class="c" style="left:719px;width:94px">技术中心</span>
<span class="c" style="left:814px;width:83px"></span>
<span class="c n" style="left:898px;width:100px">500.0000</span>
<span class="c n" style="left:999px;width:98px">-</span>
<span class="c n" style="left:1098px;width:119px">1,500.0000</span>
<span class="c n" style="left:1218px;width:120px">12,300.0000</span>
</div>
<div class="gr alt" style="top:377px">
<span class="c k" style="left:0px;width:167px">S1270012017000397-00001</span>
<span class="c" style="left:168px;width:199px">zib智能开关1路-金色</span>
<span class="c" style="left:368px;width:96px"></span>
<span class="c" style="left:465px;width:70px"></span>
<span class="c" style="left:536px;width:82px"></span>
<span class="c" style="left:619px;width:99px">个</span>
<span class="c" style="left:719px;width:94px">技术中心</span>
<span class="c" style="left:814px;width:83px"></span>
<span class="c n" style="left:898px;width:100px">100.0000</span>
<span class="c n" style="left:999px;width:98px">-</span>
<span class="c n" style="left:1098px;width:119px">-</span>
<span class="c n" style="left:1218px;width:120px"></span>
</div>
<div class="gr" style="top:406px">
<span class="c k" style="left:0px;width:167px">S1270012017000397-00002</span>
<span class="c" style="left:168px;width:199px">zib智能开关2路-金色</span>
<span class="c" style="left:368px;width:96px"></span>
<span class="c" style="left:465px;width:70px"></span>
<span class="c" style="left:536px;width:82px"></span>
<span class="c" style="left:619px;width:99px">个</span>
<span class="c" style="left:719px;width:94px">技术中心</span>
<span class="c" style="left:814px;width:83px"></span>
<span class="c n" style="left:898px;width:100px">600.0000</span>
<span class="c n" style="left:999px;width:98px">-</span>
<span class="c n" style="left:1098px;width:119px">1,800.0000</span>
<span class="c n" style="left:1218px;width:120px">14,800.0000</span>
</div>
<div class="gr alt" style="top:435px">
<span class="c k" style="left:0px;width:167px">S1270012017000397-00002</span>
<span class="c" style="left:168px;width:199px">zib智能开关2路-金色</span>
<span class="c" style="left:368px;width:96px"></span>
<span class="c" style="left:465px;width:70px"></span>
<span class="c" style="left:536px;width:82px"></span>
<span class="c" style="left:619px;width:99px">个</span>
<span class="c" style="left:719px;width:94px">技术中心</span>
<span class="c" style="left:814px;width:83px"></span>
<span class="c n" style="left:898px;width:100px">200.0000</span>
<span class="c n" style="left:999px;width:98px">-</span>
<span class="c n" style="left:1098px;width:119px">-</span>
<span class="c n" style="left:1218px;width:120px"></span>
</div>
<div class="gr" style="top:464px">
<span class="c k" style="left:0px;width:167px">S1270012017000397-00003</span>
<span class="c" style="left:168px;width:199px">zib智能开关3路-金色</span>
<span class="c" style="left:368px;width:96px"></span>
<span class="c" style="left:465px;width:70px"></span>
<span class="c" style="left:536px;width:82px"></span>
<span class="c" style="left:619px;width:99px">个</span>
<span class="c" style="left:719px;width:94px">技术中心</span>
<span class="c" style="left:814px;width:83px"></span>
<span class="c n" style="left:898px;width:100px">600.0000</span>
<span class="c n" style="left:999px;width:98px">-</span>
<span class="c n" style="left:1098px;width:119px">1,800.0000</span>
<span class="c n" style="left:1218px;width:120px">12,900.0000</span>
</div>
<div class="gr alt" style="top:493px">
<span class="c k" style="left:0px;width:167px">S1270012017000397-00003</span>
<span class="c" style="left:168px;width:199px">zib智能开关3路-金色</span>
<span class="c" style="left:368px;width:96px"></span>
<span class="c" style="left:465px;width:70px"></span>
<span class="c" style="left:536px;width:82px"></span>
<span class="c" style="left:619px;width:99px">个</span>
<span class="c" style="left:719px;width:94px">技术中心</span>
<span class="c" style="left:814px;width:83px"></span>
<span class="c n" style="left:898px;width:100px">300.0000</span>
<span class="c n" style="left:999px;width:98px">-</span>
<span class="c n" style="left:1098px;width:119px">-</span>
<span class="c n" style="left:1218px;width:120px"></span>
</div>
<div class="gr" style="top:522px">
<span class="c k" style="left:0px;width:167px">S1270012017000398-00002</span>
<span class="c" style="left:168px;width:199px">智能开关玻璃面板-金色</span>
<span class="c" style="left:368px;width:96px"></span>
<span class="c" style="left:465px;width:70px"></span>
<span class="c" style="left:536px;width:82px"></span>
<span class="c" style="left:619px;width:99px">个</span>
<span class="c" style="left:719px;width:94px">技术中心</span>
<span class="c" style="left:814px;width:83px"></span>
<span class="c n" style="left:898px;width:100px">500.0000</span>
<span class="c n" style="left:999px;width:98px">2,500.0000</span>
<span class="c n" style="left:1098px;width:119px">1,500.0000</span>
<span class="c n" style="left:1218px;width:120px">7,500.0000</span>
</div>
<div class="gr alt" style="top:551px">
<span class="c k" style="left:0px;width:167px">S1270012017000399-00001</span>
<span class="c" style="left:168px;width:199px">窗帘控制面板-金色</span>
<span class="c" style="left:368px;width:96px"></span>
<span class="c" style="left:465px;width:70px"></span>
<span class="c" style="left:536px;width:82px"></span>
<span class="c" style="left:619px;width:99px">个</span>
<span class="c" style="left:719px;width:94px">技术中心</span>
<span class="c" style="left:814px;width:83px"></span>
<span class="c n" style="left:898px;width:100px">700.0000</span>
<span class="c n" style="left:999px;width:98px">3,500.0000</span>
<span class="c n" style="left:1098px;width:119px">2,100.0000</span>
<span class="c n" style="left:1218px;width:120px">10,500.0000</span>
</div>
<div class="gr" style="top:580px">
<span class="c k" style="left:0px;width:167px">S1270012017000399-00002</span>
<span class="c" style="left:168px;width:199px">灯光情景面板</span>
<span class="c k3" style="left:368px;width:96px">ZHIYUIOT SS...</span>
<span class="c" style="left:465px;width:70px">智宇物联</span>
<span class="c" style="left:536px;width:82px"></span>
<span class="c" style="left:619px;width:99px">个</span>
<span class="c" style="left:719px;width:94px">技术中心</span>
<span class="c" style="left:814px;width:83px"></span>
<span class="c n" style="left:898px;width:100px">1,000.0000</span>
<span class="c n" style="left:999px;width:98px">54,000.0000</span>
<span class="c n" style="left:1098px;width:119px">3,000.0000</span>
<span class="c n" style="left:1218px;width:120px">162,000.0000</span>
</div>
<div class="gr alt" style="top:609px">
<span class="c k" style="left:0px;width:167px">S1270012017000478-00002</span>
<span class="c" style="left:168px;width:199px">卡式单模收发器板（10/100M自适...</span>
<span class="c k3" style="left:368px;width:96px">GT-DS01-25R</span>
<span class="c" style="left:465px;width:70px">深圳光通</span>
<span class="c" style="left:536px;width:82px"></span>
<span class="c" style="left:619px;width:99px">台</span>
<span class="c" style="left:719px;width:94px">技术中心</span>
<span class="c" style="left:814px;width:83px"></span>
<span class="c n" style="left:898px;width:100px">200.0000</span>
<span class="c n" style="left:999px;width:98px">9,500.0000</span>
<span class="c n" style="left:1098px;width:119px">1,000.0000</span>
<span class="c n" style="left:1218px;width:120px">240,000.0000</span>
</div>
<b class="ds" style="left:167px"></b>
<b class="ds" style="left:367px"></b>
<b class="ds" style="left:464px"></b>
<b class="ds" style="left:535px"></b>
<b class="ds" style="left:618px"></b>
<b class="ds" style="left:718px"></b>
<b class="ds" style="left:813px"></b>
<b class="ds" style="left:897px"></b>
<b class="ds" style="left:998px"></b>
<b class="ds" style="left:1097px"></b>
<b class="ds" style="left:1217px"></b>
<b class="ds" style="left:1338px"></b>
</div>
<div id="hscroll"><div class="tri" style="left:6px;top:4px;border-right:4px solid #a3a3a3;border-left:0"></div><div id="hthumb"></div><div class="tri" style="left:1280px;top:4px;border-left:4px solid #505050;border-right:0"></div></div>
<div id="corner"></div>
<div id="vscroll"><div class="tri" style="left:5px;top:7px;border-bottom:4px solid #a3a3a3;border-top:0"></div><div id="vthumb"></div><div class="tri" style="left:5px;top:618px;border-top:4px solid #505050;border-bottom:0"></div></div>
<div id="gfoot"><span class="ft" style="left:1000px;width:88px">5,273,713.9992</span><span class="ft" style="left:1225px;text-align:left">17,784,335.2000</span></div>
<div id="gfoot2"></div>

</div>
<div id="wm"><div style="font-size:20px;line-height:28px">激活 Windows</div><div style="font-size:15px;line-height:22px;letter-spacing:.4px;margin-top:-1px">转到“设置”以激活 Windows。</div></div>
<div id="frame"></div>
</body></html>
